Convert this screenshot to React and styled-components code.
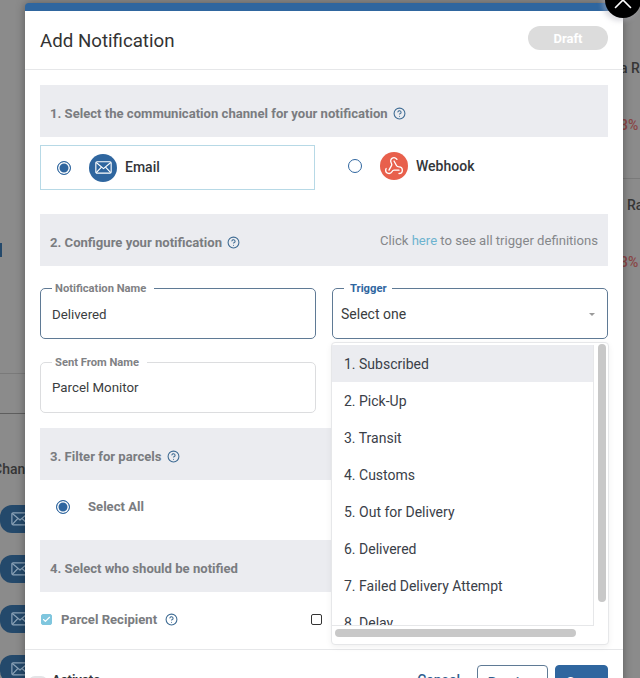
import React from 'react';
import styled, { createGlobalStyle } from 'styled-components';
import { CircleHelp, Webhook, X, Check } from 'lucide-react';

const blue = '#2f669f';
const band = '#ebecf0';
const greyText = '#7a7c80';

const GlobalStyle = createGlobalStyle`
  html, body { margin: 0; padding: 0; background: #8b8b8b; }
  body { font-family: Roboto, "Liberation Sans", sans-serif; }
`;

const Page = styled.div`
  display: grid;
  grid-template-columns: 25px 598px 17px;
  width: 640px;
  height: 678px;
  overflow: hidden;
  background: #8b8b8b;
`;

const LeftStrip = styled.div`
  display: flex;
  flex-direction: column;
  overflow: hidden;
  padding-top: 243px;
`;

const RightStrip = styled.div`
  display: flex;
  flex-direction: column;
  overflow: hidden;
  padding-top: 60px;
`;

const Tick = styled.div`
  width: 2px;
  height: 14px;
  background: #24496b;
`;

const Rule = styled.div`
  height: 1px;
  flex: none;
  margin-top: ${props => props.$top}px;
  background: ${props => props.$dark ? '#5e5e5e' : '#7a7a7a'};
`;

const BackLabel = styled.div`
  margin-top: ${props => props.$top}px;
  margin-left: ${props => props.$left || 0}px;
  font-size: 14px;
  line-height: 16px;
  font-weight: 500;
  white-space: nowrap;
  color: ${props => props.$red ? '#8a4646' : '#363636'};
`;

const PillStack = styled.div`
  display: flex;
  flex-direction: column;
  gap: 22px;
  margin-top: 28px;
`;

const Pill = styled.div`
  display: flex;
  align-items: center;
  justify-content: flex-end;
  flex: none;
  box-sizing: border-box;
  width: 32px;
  height: 28px;
  padding-right: 3px;
  border-radius: 12px 0 0 12px;
  background: #24496b;
  color: #8ca3b8;
`;

const Modal = styled.div`
  position: relative;
  margin-top: 3px;
  height: 700px;
  box-sizing: border-box;
  background: #fff;
  border-top: 8px solid ${blue};
  border-radius: 4px 4px 0 0;
  box-shadow: 0 0 10px rgba(0, 0, 0, 0.35);
`;

const CloseButton = styled.button`
  position: absolute;
  top: -29px;
  right: -18px;
  display: flex;
  align-items: center;
  justify-content: center;
  width: 36px;
  height: 36px;
  padding: 0;
  border: 0;
  border-radius: 50%;
  background: #000;
  color: #fff;
  box-shadow: -3px 3px 5px rgba(180, 180, 190, 0.45);
`;

const Header = styled.header`
  display: flex;
  align-items: center;
  justify-content: space-between;
  height: 58px;
  padding: 0 15px;
  border-bottom: 1px solid #e6e7e9;
`;

const Title = styled.h1`
  margin: 0;
  padding-top: 2px;
  font-size: 18.7px;
  font-weight: 400;
  color: #333;
`;

const DraftBadge = styled.div`
  display: flex;
  align-items: center;
  justify-content: center;
  width: 80px;
  height: 24px;
  margin-bottom: 4px;
  border-radius: 12px;
  background: #dcdcdc;
  color: #fff;
  font-size: 13px;
  font-weight: 700;
`;

const Body = styled.div`
  padding: 15px 15px 0;
`;

const Band = styled.div`
  display: flex;
  align-items: center;
  justify-content: space-between;
  height: 52px;
  padding: 0 10px;
  margin-top: ${props => props.$top || 0}px;
  background: ${band};
`;

const BandTitle = styled.div`
  display: flex;
  align-items: center;
  gap: 5px;
  padding-top: 4px;
  font-size: 13.1px;
  font-weight: 700;
  color: ${greyText};
`;

const BandNote = styled.div`
  font-size: 13.1px;
  color: #85878a;

  a {
    color: #6db3cf;
    text-decoration: none;
  }
`;

const ChannelRow = styled.div`
  display: grid;
  grid-template-columns: 275px 1fr;
  margin-top: 8px;
  height: 45px;
`;

const Channel = styled.div`
  display: flex;
  align-items: center;
  box-sizing: border-box;
  padding-left: ${props => props.$selected ? 16 : 32}px;
  padding-bottom: ${props => props.$selected ? 0 : 3}px;
  border: 1px solid ${props => props.$selected ? '#b7d9e6' : 'transparent'};
`;

const Radio = styled.span`
  flex: none;
  box-sizing: border-box;
  width: 14px;
  height: 14px;
  border-radius: 50%;
  border: 1px solid ${blue};
  background: ${props => props.$on ? blue : '#fff'};
  box-shadow: ${props => props.$on ? 'inset 0 0 0 1.5px #fff' : 'none'};
`;

const ChannelIcon = styled.span`
  display: flex;
  align-items: center;
  justify-content: center;
  flex: none;
  width: 28px;
  height: 28px;
  margin-left: 18px;
  border-radius: 50%;
  background: ${props => props.$bg};
  color: #fff;
`;

const ChannelName = styled.span`
  margin-left: 8px;
  padding-bottom: ${props => props.$raised ? 2 : 0}px;
  font-size: 14px;
  font-weight: 500;
  color: #33363a;
`;

const FieldGrid = styled.div`
  display: grid;
  grid-template-columns: 276px 276px;
  column-gap: 16px;
  row-gap: 23px;
  margin-top: 22px;
`;

const Field = styled.div`
  position: relative;
  box-sizing: border-box;
  display: flex;
  align-items: center;
  justify-content: space-between;
  height: 51px;
  padding: ${props => props.$active ? 1 : 0}px ${props => props.$select ? 12 : 11}px 0 ${props => props.$select ? 8 : 11}px;
  border: 1px solid ${props => props.$active ? '#5f7a95' : '#dcdddf'};
  border-radius: 5px;
  font-size: ${props => props.$select ? 14 : 13.3}px;
  color: #3a3d40;
`;

const FieldLabel = styled.span`
  position: absolute;
  top: -7px;
  left: 11px;
  padding: ${props => props.$accent ? '0 5px 0 6px' : '0 8px 0 3px'};
  background: #fff;
  font-size: 11.2px;
  line-height: 13px;
  font-weight: 700;
  color: ${props => props.$accent ? blue : '#7f8184'};
`;

const Caret = styled.span`
  width: 0;
  height: 0;
  border-left: 3px solid transparent;
  border-right: 3px solid transparent;
  border-top: 3px solid #9a9a9a;
`;

const Dropdown = styled.div`
  position: absolute;
  top: 53px;
  left: -2px;
  z-index: 2;
  box-sizing: border-box;
  width: 278px;
  height: 303px;
  padding: 2px 14px 19px 0;
  background: #fff;
  border: 1px solid #e6e7e9;
  border-radius: 4px;
  box-shadow: 0 2px 6px rgba(0, 0, 0, 0.06);
`;

const OptionList = styled.ul`
  height: 100%;
  margin: 0;
  padding: 0;
  overflow: hidden;
  list-style: none;
  border-right: 1px solid #e6e7e9;
  border-bottom: 1px solid #e6e7e9;
`;

const Option = styled.li`
  display: flex;
  align-items: center;
  height: 37px;
  padding-left: 12px;
  font-size: 14px;
  color: #3a4048;
  background: ${props => props.$hover ? band : 'transparent'};
`;

const VerticalThumb = styled.div`
  position: absolute;
  top: 1px;
  right: 2px;
  width: 8px;
  height: 258px;
  border-radius: 4px;
  background: #c8c8c8;
`;

const HorizontalThumb = styled.div`
  position: absolute;
  bottom: 7px;
  left: 3px;
  width: 241px;
  height: 8px;
  border-radius: 4px;
  background: #c8c8c8;
`;

const FilterRow = styled.div`
  display: flex;
  align-items: center;
  gap: 18px;
  box-sizing: border-box;
  height: 60px;
  padding: 0 0 7px 16px;
  font-size: 13.1px;
  font-weight: 700;
  color: ${greyText};
`;

const RecipientRow = styled.div`
  display: grid;
  grid-template-columns: 270px 1fr;
  align-items: center;
  box-sizing: border-box;
  height: 57px;
  padding: 0 0 3px 1px;
`;

const Recipient = styled.div`
  display: flex;
  align-items: center;
  font-size: 13.1px;
  font-weight: 700;
  color: ${greyText};

  > svg {
    margin-left: 8px;
  }
`;

const CheckBox = styled.span`
  display: flex;
  align-items: center;
  justify-content: center;
  box-sizing: border-box;
  width: 11px;
  height: 11px;
  margin-right: 9px;
  border-radius: 2px;
  border: 1px solid ${props => props.$on ? '#7fc6de' : '#333'};
  background: ${props => props.$on ? '#7fc6de' : '#fff'};
  color: #fff;
`;

const Footer = styled.footer`
  display: flex;
  align-items: flex-start;
  justify-content: space-between;
  padding: 15px 15px 0 3px;
  border-top: 1px solid #e6e7e9;
`;

const ActivateGroup = styled.div`
  display: flex;
  align-items: flex-start;
  gap: 4px;
`;

const Toggle = styled.span`
  width: 20px;
  height: 14px;
  margin-top: 11px;
  border-radius: 7px;
  background: #e3e4e6;
`;

const Activate = styled.div`
  padding-top: 7px;
  font-size: 13px;
  font-weight: 700;
  color: #33363a;
`;

const Actions = styled.div`
  display: flex;
  align-items: flex-start;
  gap: 7px;
`;

const CancelLink = styled.span`
  padding-top: 7px;
  margin-right: 10px;
  font-size: 14px;
  font-weight: 500;
  color: #2f5f8f;
`;

const ActionButton = styled.button`
  height: 35px;
  width: ${props => props.$w}px;
  padding: 0;
  border: 1px solid ${props => props.$primary ? blue : '#5f7a95'};
  border-radius: 4px;
  background: ${props => props.$primary ? blue : '#fff'};
  color: ${props => props.$primary ? '#fff' : '#2f5f8f'};
  font-family: inherit;
  font-size: 14px;
  font-weight: 500;
`;

const EnvelopeIcon = ({ size, stroke }) => (
  <svg width={size} height={size * 0.76} viewBox="0 0 21 16" fill="none" stroke={stroke} strokeWidth="1.4" strokeLinejoin="round">
    <rect x="1" y="1" width="19" height="14" rx="1.5" />
    <path d="M1.5 1.8 10.5 9.4 19.5 1.8" />
    <path d="M1.5 14.4 8 7.6M19.5 14.4 13 7.6" />
  </svg>
);

const Help = () => <CircleHelp size={13} color="#3f6c94" strokeWidth={2} />;

const triggers = [
  '1. Subscribed',
  '2. Pick-Up',
  '3. Transit',
  '4. Customs',
  '5. Out for Delivery',
  '6. Delivered',
  '7. Failed Delivery Attempt',
  '8. Delay',
];

const App = () => (
  <Page>
    <GlobalStyle />
    <LeftStrip>
      <Tick />
      <Rule $top={116} />
      <Rule $top={39} $dark />
      <BackLabel $top={47} $left={-7}>Chan</BackLabel>
      <PillStack>
        {[0, 1, 2, 3].map(i => (
          <Pill key={i}><EnvelopeIcon size={18} stroke="#8ca3b8" /></Pill>
        ))}
      </PillStack>
    </LeftStrip>

    <Modal>
      <CloseButton aria-label="Close"><X size={30} strokeWidth={1.3} /></CloseButton>
      <Header>
        <Title>Add Notification</Title>
        <DraftBadge>Draft</DraftBadge>
      </Header>
      <Body>
        <Band>
          <BandTitle>1. Select the communication channel for your notification <Help /></BandTitle>
        </Band>
        <ChannelRow>
          <Channel $selected>
            <Radio $on />
            <ChannelIcon $bg={blue}><EnvelopeIcon size={17} stroke="#fff" /></ChannelIcon>
            <ChannelName $raised>Email</ChannelName>
          </Channel>
          <Channel>
            <Radio />
            <ChannelIcon $bg="#e8604c"><Webhook size={20} strokeWidth={1.6} /></ChannelIcon>
            <ChannelName>Webhook</ChannelName>
          </Channel>
        </ChannelRow>

        <Band $top={24}>
          <BandTitle>2. Configure your notification <Help /></BandTitle>
          <BandNote>Click <a href="#defs">here</a> to see all trigger definitions</BandNote>
        </Band>
        <FieldGrid>
          <Field $active>
            <FieldLabel>Notification Name</FieldLabel>
            Delivered
          </Field>
          <Field $active $select>
            <FieldLabel $accent>Trigger</FieldLabel>
            Select one
            <Caret />
            <Dropdown>
              <OptionList>
                {triggers.map((t, i) => <Option key={t} $hover={i === 0}>{t}</Option>)}
              </OptionList>
              <VerticalThumb />
              <HorizontalThumb />
            </Dropdown>
          </Field>
          <Field>
            <FieldLabel>Sent From Name</FieldLabel>
            Parcel Monitor
          </Field>
        </FieldGrid>

        <Band $top={15}>
          <BandTitle>3. Filter for parcels <Help /></BandTitle>
        </Band>
        <FilterRow>
          <Radio $on />
          Select All
        </FilterRow>
        <Band>
          <BandTitle>4. Select who should be notified</BandTitle>
        </Band>
        <RecipientRow>
          <Recipient>
            <CheckBox $on><Check size={9} strokeWidth={3} /></CheckBox>
            Parcel Recipient
            <Help />
          </Recipient>
          <Recipient>
            <CheckBox />
          </Recipient>
        </RecipientRow>
      </Body>
      <Footer>
        <ActivateGroup>
          <Toggle />
          <Activate>Activate</Activate>
        </ActivateGroup>
        <Actions>
          <CancelLink>Cancel</CancelLink>
          <ActionButton $w={71}>Preview</ActionButton>
          <ActionButton $w={53} $primary>Save</ActionButton>
        </Actions>
      </Footer>
    </Modal>

    <RightStrip>
      <BackLabel $top={0} $left={-3}>a Ra</BackLabel>
      <BackLabel $top={41} $left={-3} $red>3%</BackLabel>
      <Rule $top={45} />
      <BackLabel $top={18} $left={4}>Ra</BackLabel>
      <BackLabel $top={41} $left={-3} $red>3%</BackLabel>
    </RightStrip>
  </Page>
);

export default App;
